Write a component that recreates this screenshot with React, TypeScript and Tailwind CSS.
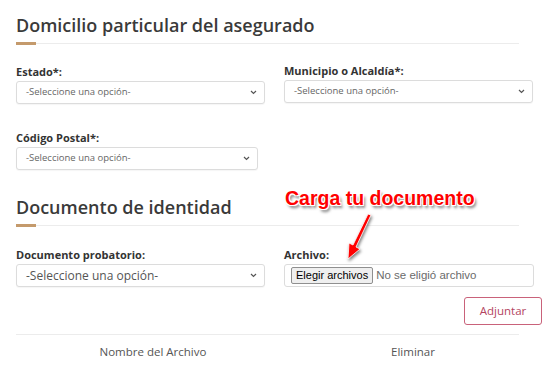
import React from 'react';

const font = { fontFamily: '"Open Sans", "DejaVu Sans", sans-serif' };
const arial = { fontFamily: '"Liberation Sans", Arial, sans-serif' };

const Chevron = () => (
  <svg width="7" height="5" viewBox="0 0 7 5" className="shrink-0">
    <path d="M1 1 L3.5 3.5 L6 1" fill="none" stroke="#555" strokeWidth="1.2" />
  </svg>
);

interface SelectProps {
  width: string;
  large?: boolean;
}

const FakeSelect = ({ width, large }: SelectProps) => (
  <div
    className={`${width} h-[23px] flex items-center justify-between pl-[9px] pr-[7px] border border-[#dcdcdc] rounded-[3px] bg-white shadow-[0_1px_1px_rgba(0,0,0,0.04)]`}
  >
    <span className={large ? 'text-[12px] text-[#555]' : 'text-[9.5px] text-[#666]'}>-Seleccione una opción-</span>
    <Chevron />
  </div>
);

const Label = ({ children }: { children: React.ReactNode }) => (
  <label className="block text-[11px] font-bold text-[#333] leading-[13px] mb-[3px]">{children}</label>
);

const SectionTitle = ({ children }: { children: React.ReactNode }) => (
  <div>
    <h2 className="text-[18px] leading-[22px] font-semibold text-[#3a3a3a]">{children}</h2>
    <div className="relative mt-[7px] w-[503px] h-px bg-[#ececec]">
      <div className="absolute left-0 -top-px w-[20px] h-[3px] bg-[#c49a6c]" />
    </div>
  </div>
);

export default function App() {
  return (
    <div className="w-[558px] h-[383px] bg-white overflow-hidden relative" style={font}>
      <div className="pl-4 pt-[14px]">
        <SectionTitle>Domicilio particular del asegurado</SectionTitle>

        <div className="flex gap-[19px] mt-[20px]">
          <div className="pt-[1px]">
            <Label>Estado*:</Label>
            <FakeSelect width="w-[249px]" />
          </div>
          <div>
            <Label>Municipio o Alcaldía*:</Label>
            <FakeSelect width="w-[249px]" />
          </div>
        </div>

        <div className="mt-[27px]">
          <Label>Código Postal*:</Label>
          <FakeSelect width="w-[242px]" />
        </div>

        <div className="mt-[26px]">
          <SectionTitle>Documento de identidad</SectionTitle>
        </div>

        <div className="flex gap-[19px] mt-[22px]">
          <div>
            <Label>Documento probatorio:</Label>
            <FakeSelect width="w-[249px]" large />
          </div>
          <div>
            <Label>Archivo:</Label>
            <div className="w-[250px] h-[23px] flex items-center pl-[6px] border border-[#dcdcdc] rounded-[3px] bg-white">
              <button
                className="h-[17px] px-[4px] bg-[#efefef] border border-[#8f8f8f] rounded-[2px] text-[11px] text-black leading-none"
                style={arial}
              >
                Elegir archivos
              </button>
              <span className="ml-[3px] text-[11.5px] text-[#6b6b6b]" style={arial}>
                No se eligió archivo
              </span>
            </div>
          </div>
        </div>

        <div className="flex justify-end w-[526px] mt-[10px]">
          <button className="w-[78px] h-[28px] border-[1.5px] border-[#c9627a] rounded-[3px] text-[11.5px] text-[#b3445f] bg-white">
            Adjuntar
          </button>
        </div>

        <div className="w-[503px] h-px bg-[#ececec] mt-[9px]" />
        <div className="flex w-[520px] text-[11.5px] text-[#555] mt-[8px]">
          <div className="w-[274px] text-center">Nombre del Archivo</div>
          <div className="w-[246px] text-center">Eliminar</div>
        </div>
      </div>

      {/* anotación sobre la captura */}
      <div
        className="absolute left-[285px] top-[186px] text-[19.5px] font-bold text-[#ff0000] leading-[24px]"
        style={{
          ...arial,
          textShadow:
            '1px 1px 0 #fff, -1px -1px 0 #fff, 1px -1px 0 #fff, -1px 1px 0 #fff, 2px 3px 3px rgba(0,0,0,0.55)',
        }}
      >
        Carga tu documento
      </div>
      <svg className="absolute left-[340px] top-[210px]" width="40" height="56" viewBox="0 0 40 56">
        <g style={{ filter: 'drop-shadow(1px 2px 1.5px rgba(0,0,0,0.5))' }}>
          <path d="M28 4 L31 5 L16 37 L20 39 L8 49 L9 33 L13 35 Z" fill="#ff0000" stroke="#fff" strokeWidth="0.8" />
        </g>
      </svg>
    </div>
  );
}
